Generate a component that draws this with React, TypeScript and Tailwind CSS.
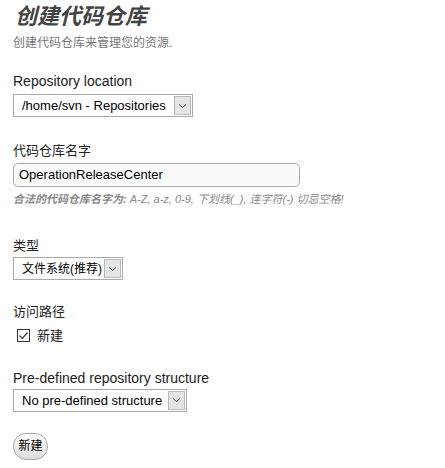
import React from 'react'

const sans = "font-['Liberation_Sans','Noto_Sans_CJK_SC',sans-serif]"

function FakeSelect({ label, width, cjk }: { label: string; width: string; cjk?: boolean }) {
  return (
    <div className={`flex h-[23px] items-center justify-between border border-[#a9a9a9] bg-white pl-[8px] pr-[1px] ${width}`}>
      <span className={`whitespace-nowrap leading-none text-black ${cjk ? 'text-[12px]' : 'text-[13px]'}`}>{label}</span>
      <span className="flex h-[19px] w-[17px] shrink-0 items-center justify-center border border-[#b9b9b9] bg-[#e5e5e5]">
        <svg width="9" height="6" viewBox="0 0 9 6">
          <path d="M1 1.5 L4.5 4.5 L8 1.5" fill="none" stroke="#606060" strokeWidth="1" />
        </svg>
      </span>
    </div>
  )
}

export default function App() {
  return (
    <div className={`min-h-screen bg-white px-[13px] text-[#222] ${sans}`}>
      <h1 className="pl-[2px] pt-[2px] text-[22px] italic font-semibold leading-[30px] text-[#444]">创建代码仓库</h1>
      <p className="mt-[3px] text-[12px] leading-[16px] text-[#777]">创建代码仓库来管理您的资源.</p>

      <div className="mt-[22px]">
        <div className="text-[14px] leading-[16px]">Repository location</div>
        <div className="mt-[5px]">
          <FakeSelect label="/home/svn - Repositories" width="w-[180px]" />
        </div>
      </div>

      <div className="mt-[26px]">
        <div className="text-[13px] leading-[16px]">代码仓库名字</div>
        <div className="mt-[4px] flex h-[24px] w-[287px] items-center rounded-[5px] border border-[#a9a9a9] bg-[#fafafa] px-[5px] text-[13px] text-black">
          OperationReleaseCenter
        </div>
        <p className="mt-[5px] text-[11px] italic leading-[14px] text-[#888]">
          <b>合法的代码仓库名字为:</b> A-Z, a-z, 0-9, 下划线(_), 连字符(-) 切忌空格!
        </p>
      </div>

      <div className="mt-[32px]">
        <div className="text-[13px] leading-[16px]">类型</div>
        <div className="mt-[3px]">
          <FakeSelect label="文件系统(推荐)" width="w-[110px]" cjk />
        </div>
      </div>

      <div className="mt-[24px]">
        <div className="text-[13px] leading-[16px]">访问路径</div>
        <label className="mt-[6px] flex items-center gap-[7px] pl-[4px] text-[13px]">
          <span className="flex h-[13px] w-[13px] items-center justify-center border border-[#333] bg-white">
            <svg width="11" height="11" viewBox="0 0 11 11">
              <path d="M1.5 5.5 L4.3 8.3 L9.5 2.5" fill="none" stroke="#333" strokeWidth="1.2" />
            </svg>
          </span>
          <span>新建</span>
        </label>
      </div>

      <div className="mt-[24px]">
        <div className="text-[14px] leading-[16px]">Pre-defined repository structure</div>
        <div className="mt-[3px]">
          <FakeSelect label="No pre-defined structure" width="w-[174px]" />
        </div>
      </div>

      <button className="mt-[21px] flex h-[27px] w-[35px] items-center justify-center rounded-[13px] border border-[#aaa] bg-gradient-to-b from-[#fdfdfd] to-[#dcdcdc] text-[12px] text-black">
        新建
      </button>
    </div>
  )
}
